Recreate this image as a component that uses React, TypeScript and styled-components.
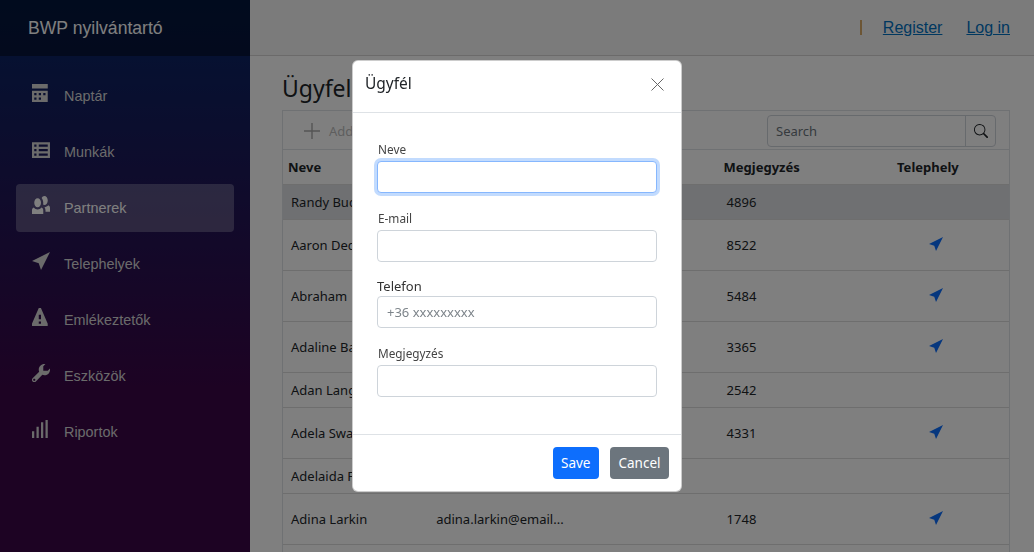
import React from "react";
import styled, { createGlobalStyle } from "styled-components";
import { BsSearch } from "react-icons/bs";

const BODY_FONT = `"Noto Sans", "Open Sans", sans-serif`;
const NAV_FONT = `"Liberation Sans", Arial, sans-serif`;

const GlobalStyle = createGlobalStyle`
html, body {
    margin: 0;
    height: 100%;
    overflow: hidden;
}
body {
    font-family: ${BODY_FONT};
    color: #212529;
    background: #fff;
}
* {
    box-sizing: border-box;
}
`;

const Page = styled.div`
display: flex;
height: 100vh;
overflow: hidden;
`;

const Sidebar = styled.aside`
flex: 0 0 250px;
display: flex;
flex-direction: column;
background-image: linear-gradient(180deg, rgb(5, 39, 103) 0%, #3a0647 70%);
font-family: ${NAV_FONT};
`;

const Brand = styled.div`
height: 56px;
flex: 0 0 56px;
display: flex;
align-items: center;
padding-left: 28px;
background-color: rgba(0, 0, 0, 0.4);
color: #fff;
font-size: 17.6px;
`;

const NavList = styled.nav`
display: flex;
flex-direction: column;
gap: 8px;
padding: 16px 16px 0;
`;

const NavLink = styled.a<{ $active?: boolean }>`
height: 48px;
display: flex;
align-items: center;
padding-left: 16px;
border-radius: 4px;
color: ${props => (props.$active ? "#fff" : "#d7d7d7")};
background-color: ${props => (props.$active ? "rgba(255, 255, 255, 0.25)" : "transparent")};
font-size: 14.4px;
`;

const NavIcon = styled.svg`
flex: 0 0 18px;
width: 18px;
height: 18px;
margin: 0 14px 6px 0;
fill: currentColor;
`;

const Main = styled.main`
flex: 1;
min-width: 0;
display: flex;
flex-direction: column;
`;

const TopRow = styled.header`
height: 56px;
flex: 0 0 56px;
display: flex;
align-items: center;
justify-content: flex-end;
gap: 24px;
padding-right: 24px;
background-color: #f7f7f7;
border-bottom: 1px solid #d6d5d5;
font-family: ${NAV_FONT};
font-size: 16px;
`;

const Tick = styled.span`
width: 2px;
height: 15px;
margin-right: -3px;
background-color: #d8ab68;
`;

const TopLink = styled.a`
color: #0071c1;
text-decoration: underline;
`;

const Content = styled.div`
flex: 1;
min-height: 0;
padding: 0 24px 0 32px;
`;

const Heading = styled.h3`
height: 54px;
margin: 0;
padding-top: 14px;
font-size: 23px;
font-weight: 400;
line-height: 36px;
`;

const Grid = styled.div`
border: 1px solid #dee2e6;
border-bottom: none;
font-size: 13px;
`;

const Toolbar = styled.div`
height: 39px;
display: flex;
align-items: center;
justify-content: space-between;
padding: 2px 13px 0 21px;
border-bottom: 1px solid #dee2e6;
`;

const AddButton = styled.span`
display: flex;
align-items: center;
gap: 9px;
color: #bdbdbd;
`;

const SearchGroup = styled.div`
width: 229px;
height: 32px;
display: flex;
border: 1px solid #ced4da;
border-radius: 4px;
`;

const SearchInput = styled.input`
flex: 1;
min-width: 0;
padding: 0 8px;
border: none;
background: transparent;
font: inherit;
outline: none;
&::placeholder {
    color: #6c757d;
}
`;

const SearchButton = styled.span`
flex: 0 0 30px;
display: flex;
align-items: center;
justify-content: center;
border-left: 1px solid #ced4da;
color: #212529;
`;

const Row = styled.div<{ $tall?: boolean; $selected?: boolean }>`
height: ${props => (props.$tall ? "51px" : "35px")};
display: grid;
grid-template-columns: repeat(5, 1fr);
align-items: center;
border-bottom: 1px solid #dcdcdc;
background-color: ${props => (props.$selected ? "#dfe1e4" : "transparent")};
`;

const HeaderRow = styled(Row)`
font-weight: 700;
`;

const HeadCell = styled.div<{ $column: number; $center?: boolean }>`
grid-column: ${props => props.$column};
padding: ${props => (props.$center ? "0 17px 0 0" : "0 5px")};
text-align: ${props => (props.$center ? "center" : "left")};
`;

const Cell = styled.div<{ $column: number }>`
grid-column: ${props => props.$column};
padding: 0 8px;
white-space: nowrap;
overflow: hidden;
`;

const LocationCell = styled.div`
grid-column: 5;
display: flex;
justify-content: center;
color: #0d6efd;
`;

const LocationIcon = styled.svg`
width: 14px;
height: 14px;
margin-bottom: 2px;
fill: currentColor;
`;

const Backdrop = styled.div`
position: fixed;
inset: 0;
display: flex;
justify-content: center;
align-items: flex-start;
padding-top: 60px;
background-color: rgba(0, 0, 0, 0.5);
`;

const Modal = styled.div`
width: 330px;
background-color: #fff;
border: 1px solid rgba(0, 0, 0, 0.2);
border-radius: 6px;
overflow: hidden;
`;

const ModalHeader = styled.div`
height: 52px;
display: flex;
align-items: center;
justify-content: space-between;
padding: 0 17px 4px 12px;
border-bottom: 1px solid #dee2e6;
`;

const ModalTitle = styled.h5`
margin: 0 0 4px;
font-size: 15.5px;
font-weight: 400;
line-height: 24px;
`;

const CloseIcon = styled.svg`
width: 13px;
height: 13px;
fill: none;
stroke: #666;
stroke-width: 1;
`;

const ModalBody = styled.div`
padding: 27px 24px 37px;
display: flex;
flex-direction: column;
`;

const Field = styled.div<{ $space: number }>`
display: flex;
flex-direction: column;
margin-bottom: ${props => props.$space}px;
`;

const Label = styled.label<{ $large?: boolean }>`
height: ${props => (props.$large ? "19px" : "21px")};
padding-left: ${props => (props.$large ? "0" : "1px")};
font-size: ${props => (props.$large ? "13px" : "11.8px")};
line-height: 19px;
color: ${props => (props.$large ? "#333" : "#444")};
`;

const TextInput = styled.input<{ $focused?: boolean }>`
height: 32px;
width: 100%;
padding: 0 9px;
border: 1px solid ${props => (props.$focused ? "#86b7fe" : "#ced4da")};
border-radius: 4px;
box-shadow: ${props => (props.$focused ? "0 0 0 3px rgba(13, 110, 253, 0.25)" : "none")};
font-family: ${BODY_FONT};
font-size: 13px;
color: #212529;
outline: none;
&::placeholder {
    color: #7d848a;
}
`;

const ModalFooter = styled.div`
height: 57px;
display: flex;
align-items: flex-start;
justify-content: flex-end;
gap: 11px;
padding: 12px 12px 0;
border-top: 1px solid #dee2e6;
`;

const Button = styled.button<{ $variant: "primary" | "secondary" }>`
height: 32px;
padding: 0 8.5px;
border: none;
border-radius: 4px;
background-color: ${props => (props.$variant === "primary" ? "#0d6efd" : "#6c757d")};
color: #fff;
font-family: ${BODY_FONT};
font-size: 13.5px;
`;

type NavEntry = {
    label: string;
    path: string;
    shift?: number;
    active?: boolean;
};

const navEntries: NavEntry[] = [
    { label: "Naptár", path: "M0 0v2h7v-2h-7zm0 3v4.91c0 .05.04.09.09.09h6.81c.05 0 .09-.04.09-.09v-4.91h-7zm1 1h1v1h-1v-1zm2 0h1v1h-1v-1zm2 0h1v1h-1v-1zm-4 2h1v1h-1v-1zm2 0h1v1h-1v-1z" },
    { label: "Munkák", shift: 1, path: "M.09 0c-.06 0-.09.04-.09.09v6.81c0 .05.04.09.09.09h7.81c.05 0 .09-.04.09-.09v-6.81c0-.06-.04-.09-.09-.09h-7.81zm.91 1h1v1h-1v-1zm2 0h4v1h-4v-1zm-2 2h1v1h-1v-1zm2 0h4v1h-4v-1zm-2 2h1v1h-1v-1zm2 0h4v1h-4v-1z" },
    { label: "Partnerek", active: true, path: "M5.5 0c-.51 0-.95.35-1.22.88.45.54.72 1.28.72 2.13 0 .29-.03.55-.09.81.19.11.38.19.59.19.83 0 1.5-.9 1.5-2s-.67-2-1.5-2zm-3 1c-.83 0-1.5.9-1.5 2s.67 2 1.5 2 1.5-.9 1.5-2-.67-2-1.5-2zm4.75 3.16c-.43.51-1.02.82-1.69.84.27.38.44.84.44 1.34v.66h2v-1.66c0-.52-.31-.97-.75-1.19zm-6.5 1c-.44.22-.75.67-.75 1.19v1.66h5v-1.66c0-.52-.31-.97-.75-1.19-.45.53-1.06.84-1.75.84s-1.3-.32-1.75-.84z" },
    { label: "Telephelyek", path: "M8 0l-8 4 3 1 1 3 4-8z" },
    { label: "Emlékeztetők", path: "M3.09 0c-.06 0-.1.04-.13.09l-2.94 6.81c-.02.05-.03.13-.03.19v.81c0 .05.04.09.09.09h6.81c.05 0 .09-.04.09-.09v-.81c0-.05-.01-.14-.03-.19l-2.94-6.81c-.02-.05-.07-.09-.13-.09h-.81zm-.09 3h1v2h-1v-2zm0 3h1v1h-1v-1z" },
    { label: "Eszközök", path: "M5.5 0c-1.38 0-2.5 1.12-2.5 2.5 0 .32.08.62.19.91l-2.91 2.88c-.39.39-.39 1.05 0 1.44.2.2.46.28.72.28.26 0 .52-.09.72-.28l2.88-2.91c.28.11.58.19.91.19 1.38 0 2.5-1.12 2.5-2.5 0-.16 0-.32-.03-.47l-.97.97h-2v-2l.97-.97c-.15-.03-.31-.03-.47-.03zm-4.5 6.5c.28 0 .5.22.5.5s-.22.5-.5.5-.5-.22-.5-.5.22-.5.5-.5z" },
    { label: "Riportok", path: "M6 0v8h1v-8h-1zm-2 1v7h1v-7h-1zm-2 2v5h1v-5h-1zm-2 2v3h1v-3h-1z" },
];

type Customer = {
    name: string;
    email?: string;
    note?: string;
    site?: boolean;
};

const customers: Customer[] = [
    { name: "Randy Buckridge", note: "4896" },
    { name: "Aaron Dechow", note: "8522", site: true },
    { name: "Abraham", note: "5484", site: true },
    { name: "Adaline Bauch", note: "3365", site: true },
    { name: "Adan Lang", note: "2542" },
    { name: "Adela Swaniawski", note: "4331", site: true },
    { name: "Adelaida Feest" },
    { name: "Adina Larkin", email: "adina.larkin@email...", note: "1748", site: true },
    { name: "" },
];

const App = () => {
    return (
        <>
            <GlobalStyle />
            <Page>
                <Sidebar>
                    <Brand>BWP nyilvántartó</Brand>
                    <NavList>
                        {navEntries.map((entry: NavEntry) => (
                            <NavLink key={entry.label} $active={entry.active}>
                                <NavIcon viewBox="0 0 8 8">
                                    <path d={entry.path} transform={`translate(0 ${entry.shift ?? 0})`} />
                                </NavIcon>
                                {entry.label}
                            </NavLink>
                        ))}
                    </NavList>
                </Sidebar>
                <Main>
                    <TopRow>
                        <Tick />
                        <TopLink>Register</TopLink>
                        <TopLink>Log in</TopLink>
                    </TopRow>
                    <Content>
                        <Heading>Ügyfelek</Heading>
                        <Grid>
                            <Toolbar>
                                <AddButton>
                                    <svg width="16" height="16" viewBox="0 0 16 16" stroke="#a9a9a9" strokeWidth="1.4">
                                        <path d="M8 0v16M0 8h16" />
                                    </svg>
                                    Add
                                </AddButton>
                                <SearchGroup>
                                    <SearchInput placeholder="Search" />
                                    <SearchButton>
                                        <BsSearch size={14} />
                                    </SearchButton>
                                </SearchGroup>
                            </Toolbar>
                            <HeaderRow>
                                <HeadCell $column={1}>Neve</HeadCell>
                                <HeadCell $column={4}>Megjegyzés</HeadCell>
                                <HeadCell $column={5} $center>Telephely</HeadCell>
                            </HeaderRow>
                            {customers.map((customer: Customer, index: number) => (
                                <Row key={index} $tall={customer.site} $selected={index === 0}>
                                    <Cell $column={1}>{customer.name}</Cell>
                                    {customer.email && <Cell $column={2}>{customer.email}</Cell>}
                                    {customer.note && <Cell $column={4}>{customer.note}</Cell>}
                                    {customer.site && (
                                        <LocationCell>
                                            <LocationIcon viewBox="0 0 8 8">
                                                <path d="M8 0l-8 4 3 1 1 3 4-8z" />
                                            </LocationIcon>
                                        </LocationCell>
                                    )}
                                </Row>
                            ))}
                        </Grid>
                    </Content>
                </Main>
            </Page>
            <Backdrop>
                <Modal>
                    <ModalHeader>
                        <ModalTitle>Ügyfél</ModalTitle>
                        <CloseIcon viewBox="0 0 13 13">
                            <path d="M.5.5l12 12M12.5.5l-12 12" />
                        </CloseIcon>
                    </ModalHeader>
                    <ModalBody>
                        <Field $space={16}>
                            <Label>Neve</Label>
                            <TextInput $focused />
                        </Field>
                        <Field $space={15}>
                            <Label>E-mail</Label>
                            <TextInput />
                        </Field>
                        <Field $space={16}>
                            <Label $large>Telefon</Label>
                            <TextInput placeholder="+36 xxxxxxxxx" />
                        </Field>
                        <Field $space={0}>
                            <Label>Megjegyzés</Label>
                            <TextInput />
                        </Field>
                    </ModalBody>
                    <ModalFooter>
                        <Button $variant="primary">Save</Button>
                        <Button $variant="secondary">Cancel</Button>
                    </ModalFooter>
                </Modal>
            </Backdrop>
        </>
    );
};

export default App;
